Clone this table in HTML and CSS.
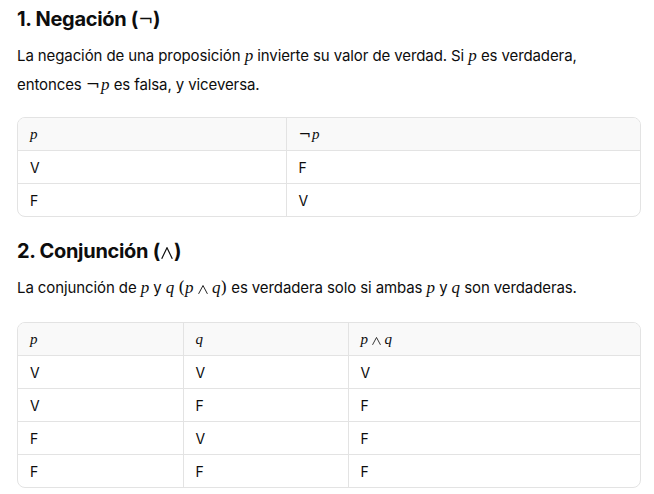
FILE: index.html
```html
<!DOCTYPE html>
<html lang="es">
<head>
<meta charset="utf-8">
<link rel="stylesheet" href="styles.css">
</head>
<body>
<main class="content">
  <h3 class="heading">1. Negación (<span class="op">¬</span>)</h3>
  <p class="para">La negación de una proposición <span class="m">p</span> invierte su valor de verdad. Si <span class="m">p</span> es verdadera, entonces <span class="m"><span class="op neg">¬</span>p</span> es falsa, y viceversa.</p>
  <div class="table-wrap">
    <table class="truth t1">
      <thead>
        <tr><th class="c1"><span class="m">p</span></th><th><span class="m"><span class="op neg">¬</span>p</span></th></tr>
      </thead>
      <tbody>
        <tr><td>V</td><td>F</td></tr>
        <tr><td>F</td><td>V</td></tr>
      </tbody>
    </table>
  </div>

  <h3 class="heading">2. Conjunción (<span class="wedge wedge-lg">∧</span>)</h3>
  <p class="para para-math">La conjunción de <span class="m">p</span> y <span class="m">q</span> <span class="m"><span class="up">(</span>p <span class="wedge wedge-md">∧</span> q<span class="up">)</span></span> es verdadera solo si ambas <span class="m">p</span> y <span class="m">q</span> son verdaderas.</p>
  <div class="table-wrap">
    <table class="truth t2">
      <thead>
        <tr><th class="c1"><span class="m">p</span></th><th class="c2"><span class="m">q</span></th><th><span class="m">p <span class="wedge wedge-sm">∧</span> q</span></th></tr>
      </thead>
      <tbody>
        <tr><td>V</td><td>V</td><td>V</td></tr>
        <tr><td>V</td><td>F</td><td>F</td></tr>
        <tr><td>F</td><td>V</td><td>F</td></tr>
        <tr><td>F</td><td>F</td><td>F</td></tr>
      </tbody>
    </table>
  </div>
</main>
</body>
</html>
```
FILE: styles.css
```css
html, body {
  margin: 0;
  padding: 0;
  background: #ffffff;
}
body {
  font-family: Inter, "Noto Sans", sans-serif;
  color: #0d0d0d;
}
.content {
  padding: 5px 13px 0 17px;
}
.heading {
  font-size: 20px;
  line-height: 28px;
  font-weight: 700;
  margin: 0;
  letter-spacing: -0.3px;
}
.para {
  font-size: 15px;
  line-height: 28px;
  margin: 8px 0 0 0;
  letter-spacing: -0.1px;
}
.para-math {
  padding-bottom: 2px;
}
.m {
  font-family: "Liberation Serif", "DejaVu Serif", serif;
  font-style: italic;
  font-size: 17px;
  letter-spacing: 0;
}
.op, .up {
  font-style: normal;
  font-family: "DejaVu Serif", "Liberation Serif", serif;
  font-weight: 400;
}
.op.neg {
  margin-right: 1px;
}
.heading .op {
  font-size: 18px;
}
.wedge {
  display: inline-block;
  overflow: hidden;
  color: transparent;
  font-style: normal;
  font-weight: 400;
  text-align: center;
  vertical-align: -1px;
  background-repeat: no-repeat;
  background-position: center;
  background-size: 100% 100%;
  background-image: url("data:image/svg+xml,%3Csvg xmlns='http://www.w3.org/2000/svg' viewBox='0 0 12 12' preserveAspectRatio='none'%3E%3Cpath d='M0.7 11.8 L6 0.7 L11.3 11.8' fill='none' stroke='%230d0d0d' stroke-width='1.15' stroke-linejoin='miter'/%3E%3C/svg%3E");
}
.wedge-lg {
  width: 12px;
  height: 12px;
  margin: 0 1px;
  font-size: 10px;
  line-height: 12px;
}
.wedge-md {
  width: 10px;
  height: 9px;
  font-size: 8px;
  line-height: 9px;
}
.wedge-sm {
  width: 9px;
  height: 8px;
  font-size: 7px;
  line-height: 8px;
}
.table-wrap {
  margin: 18px 0 0 0;
  border: 1px solid #e3e3e3;
  border-radius: 8px;
  overflow: hidden;
}
.table-wrap + .heading {
  margin-top: 20px;
}
.truth {
  width: 100%;
  border-collapse: collapse;
  font-size: 14px;
}
.truth th, .truth td {
  text-align: left;
  height: 32px;
  padding: 0 12px;
  border-left: 1px solid #e3e3e3;
  border-top: 1px solid #e3e3e3;
  font-weight: 400;
}
.truth th {
  background: #f9f9f9;
  border-top: none;
}
.truth th:first-child, .truth td:first-child {
  border-left: none;
}
.truth th .m {
  font-size: 15px;
}
.t1 .c1 { width: 268px; box-sizing: border-box; }
.t2 .c1, .t2 .c2 { width: 165px; box-sizing: border-box; }
```
